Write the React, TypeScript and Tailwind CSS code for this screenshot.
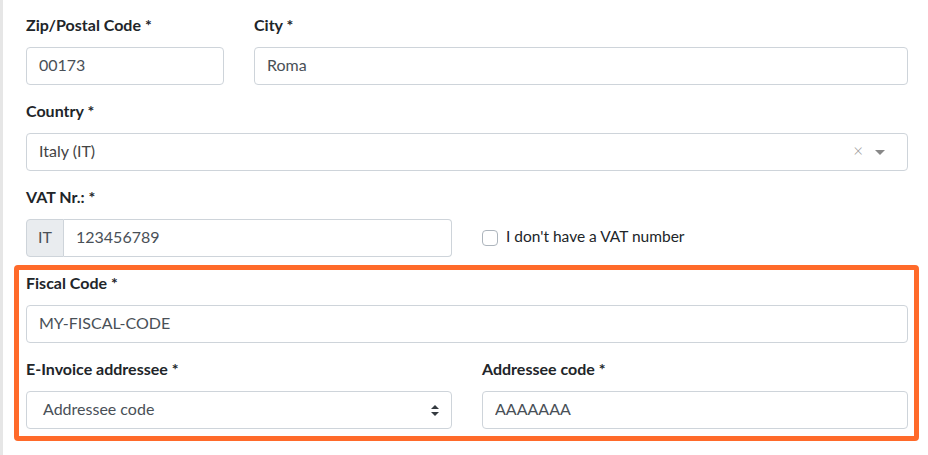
import { useState } from "react"

const font = { fontFamily: "Lato, 'Open Sans', sans-serif" }

function Label({ children }: { children: React.ReactNode }) {
  return <label className="mb-3 block text-base font-bold leading-5 text-[#212529]">{children}</label>
}

function TextInput({ value }: { value: string }) {
  return (
    <input
      defaultValue={value}
      className="block h-[38px] w-full rounded border border-[#ced4da] bg-white px-3 pb-[3px] text-base text-[#495057] outline-none"
    />
  )
}

export default function App() {
  const [noVat, setNoVat] = useState(false)

  return (
    <div className="flex min-h-[455px] w-[928px] bg-white" style={font}>
      <div className="w-[3px] shrink-0 bg-[#e6e6e6]" />
      <div className="flex-1 pl-[23px] pr-[20px] pt-[15px]">
        {/* zip + city */}
        <div className="mb-4 grid grid-cols-[198px_1fr] gap-x-[30px]">
          <div>
            <Label>Zip/Postal Code *</Label>
            <TextInput value="00173" />
          </div>
          <div>
            <Label>City *</Label>
            <TextInput value="Roma" />
          </div>
        </div>

        {/* country */}
        <div className="mb-4">
          <Label>Country *</Label>
          <div className="flex h-[38px] items-center rounded border border-[#ced4da] bg-white pb-[3px] pl-3 pr-[22px] text-base text-[#444]">
            <span className="flex-1">Italy (IT)</span>
            <span className="mr-[12px] text-[17px] font-light leading-none text-[#999]">×</span>
            <svg width="10" height="5" viewBox="0 0 10 5" className="mt-[3px]">
              <path d="M0 0 L10 0 L5 5 Z" fill="#888" />
            </svg>
          </div>
        </div>

        {/* vat */}
        <div className="mb-2">
          <Label>VAT Nr.: *</Label>
          <div className="grid grid-cols-2 gap-x-[30px]">
            <div className="flex h-[38px]">
              <span className="flex w-[38px] items-center justify-center rounded-l border border-[#ced4da] bg-[#e9ecef] pb-[3px] text-base text-[#495057]">
                IT
              </span>
              <input
                defaultValue="123456789"
                className="h-[38px] min-w-0 flex-1 rounded-r border border-l-0 border-[#ced4da] px-3 pb-[3px] text-base text-[#495057] outline-none"
              />
            </div>
            <label className="flex items-center gap-2 pb-[2px] text-[15.5px] text-[#212529]">
              <input
                type="checkbox"
                checked={noVat}
                onChange={(e) => setNoVat(e.target.checked)}
                className="mt-[2px] h-4 w-4 appearance-none rounded border border-[#adb5bd] bg-white"
              />
              I don't have a VAT number
            </label>
          </div>
        </div>

        {/* highlighted e-invoice fields */}
        <div className="-ml-3 mr-[-11px] rounded-sm border-[5px] border-[#ff6a2a] pb-[7px] pl-[7px] pr-[6px] pt-[3px]">
          <div className="mb-4">
            <Label>Fiscal Code *</Label>
            <TextInput value="MY-FISCAL-CODE" />
          </div>
          <div className="grid grid-cols-2 gap-x-[30px]">
            <div>
              <Label>E-Invoice addressee *</Label>
              <div className="flex h-[38px] items-center rounded border border-[#ced4da] bg-white pb-[3px] pl-4 pr-3 text-base text-[#495057]">
                <span className="flex-1">Addressee code</span>
                <svg width="8" height="11" viewBox="0 0 8 11" className="mt-[3px]">
                  <path d="M0 4 L4 0 L8 4 Z M0 7 L4 11 L8 7 Z" fill="#343a40" />
                </svg>
              </div>
            </div>
            <div>
              <Label>Addressee code *</Label>
              <TextInput value="AAAAAAA" />
            </div>
          </div>
        </div>
      </div>
    </div>
  )
}
